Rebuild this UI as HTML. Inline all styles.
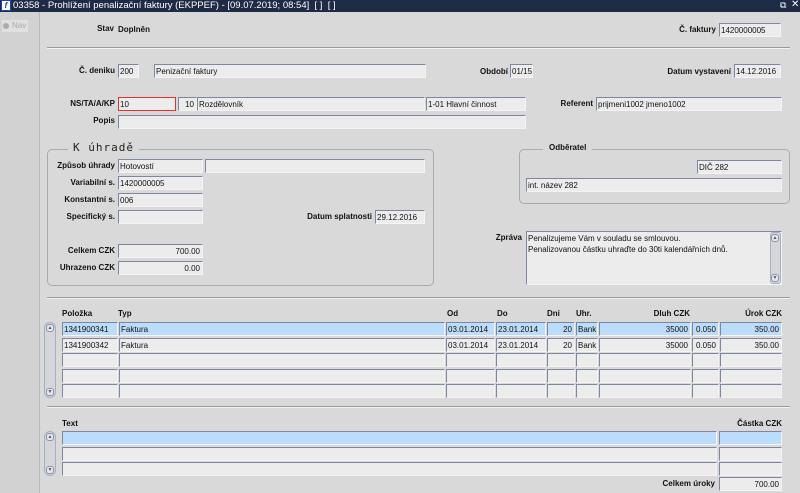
<!DOCTYPE html>
<html><head><meta charset="utf-8">
<style>
*{margin:0;padding:0;box-sizing:border-box}
body{width:800px;height:493px;overflow:hidden;background:#d9d9d9;font-family:"Liberation Sans",Arial,sans-serif;font-size:8px;color:#000;position:relative}
.a{position:absolute}
.f{position:absolute;background:#ececec;border-top:1px solid #7b88a0;border-left:1px solid #7b88a0;border-right:1px solid #f4f4f4;border-bottom:1px solid #f4f4f4;height:14px;font-size:8px;line-height:13px;padding:0 1px;white-space:nowrap;overflow:hidden;color:#111}
.r{text-align:right;padding-right:2px}
.sel{background:#bcdcfb}
.l{position:absolute;font-weight:bold;font-size:8px;line-height:12px;text-align:right;white-space:nowrap;color:#111}
.h{position:absolute;font-weight:bold;font-size:8px;white-space:nowrap;color:#111}
.sep{position:absolute;height:1px;background:#9a9a9a;border-bottom:1px solid #f2f2f2;box-sizing:content-box}
.box{position:absolute;border:1px solid #a6aab3;border-radius:5px}
.sb{position:absolute;width:12px;border:1px solid #a6b0c2;border-radius:6px;background:#d4d6da}
.sb .u,.sb .d{position:absolute;left:1px;width:8px;height:8px;border:1px solid #8894aa;border-radius:3px;background:#e6e8ec;font-size:5px;line-height:7px;text-align:center;color:#556}
</style></head><body>
<div class="a" style="left:0;top:0;width:800px;height:12px;background:#1e2b45"></div>
<div class="a" style="left:1px;top:0;width:10px;height:11px;background:#fff;border:1px solid #2040c0;font-size:8px;line-height:9px;font-weight:bold;font-style:italic;color:#2040c0;text-align:center">f</div>
<div class="a" style="left:13px;top:0;color:#fff;font-size:9.5px;line-height:12px;white-space:nowrap">03358 - Prohlížení penalizační faktury (EKPPEF) - [09.07.2019; 08:54]&nbsp; [ ]&nbsp; [ ]</div>
<div class="a" style="left:780px;top:0;color:#fff;font-size:9px">⧉</div>
<div class="a" style="left:791px;top:-1px;color:#fff;font-size:10px">✕</div>
<div class="a" style="left:0;top:12px;width:40px;height:481px;background:#d2d2d2;border-right:1px solid #b8b8b8"></div>
<div class="a" style="left:2px;top:20px;width:26px;height:12px;background:#e0e0e0"></div>
<div class="a" style="left:3px;top:23px;width:6px;height:6px;border-radius:50%;background:#aaa"></div>
<div class="a" style="left:12px;top:21px;color:#a8a8a8;font-size:8px">Nav</div>

<div class="l" style="right:686px;top:23px">Stav</div>
<div class="h" style="left:118px;top:25px">Doplněn</div>
<div class="l" style="right:84px;top:24px">Č. faktury</div>
<div class="f" style="left:719px;top:23px;width:62px">1420000005</div>
<div class="sep" style="left:47px;top:47px;width:743px"></div>

<div class="l" style="right:685px;top:65px">Č. deniku</div>
<div class="f" style="left:118px;top:64px;width:21px">200</div>
<div class="f" style="left:154px;top:64px;width:272px">Penizační faktury</div>
<div class="l" style="right:292px;top:66px">Období</div>
<div class="f" style="left:510px;top:64px;width:23px">01/15</div>
<div class="l" style="right:69px;top:66px">Datum vystavení</div>
<div class="f" style="left:734px;top:64px;width:47px">14.12.2016</div>

<div class="l" style="right:685px;top:98px">NS/TA/A/KP</div>
<div class="f" style="left:118px;top:97px;width:58px;border:1px solid #e03030">10</div>
<div class="f r" style="left:178px;top:97px;width:19px">10</div>
<div class="f" style="left:197px;top:97px;width:228px">Rozdělovník</div>
<div class="f" style="left:426px;top:97px;width:100px">1-01 Hlavní činnost</div>
<div class="l" style="right:207px;top:98px">Referent</div>
<div class="f" style="left:596px;top:97px;width:186px">prijmeni1002 jmeno1002</div>
<div class="l" style="right:685px;top:115px">Popis</div>
<div class="f" style="left:118px;top:115px;width:408px"></div>

<div class="box" style="left:47px;top:149px;width:387px;height:137px"></div>
<div class="a" style="left:68px;top:141px;background:#d9d9d9;padding:0 5px;font-family:'DejaVu Sans Mono','Liberation Mono',monospace;font-size:11px;letter-spacing:1px;color:#222">K úhradě</div>
<div class="l" style="right:685px;top:160px">Způsob úhrady</div>
<div class="f" style="left:118px;top:159px;width:85px">Hotovostí</div>
<div class="f" style="left:205px;top:159px;width:220px"></div>
<div class="l" style="right:685px;top:177px">Variabilní s.</div>
<div class="f" style="left:118px;top:176px;width:85px">1420000005</div>
<div class="l" style="right:685px;top:194px">Konstantní s.</div>
<div class="f" style="left:118px;top:193px;width:85px">006</div>
<div class="l" style="right:685px;top:211px">Specifický s.</div>
<div class="f" style="left:118px;top:210px;width:85px"></div>
<div class="l" style="right:428px;top:211px">Datum splatnosti</div>
<div class="f" style="left:375px;top:210px;width:50px">29.12.2016</div>
<div class="l" style="right:685px;top:245px">Celkem CZK</div>
<div class="f r" style="left:118px;top:244px;width:85px">700.00</div>
<div class="l" style="right:685px;top:262px">Uhrazeno CZK</div>
<div class="f r" style="left:118px;top:261px;width:85px">0.00</div>

<div class="box" style="left:519px;top:149px;width:271px;height:55px"></div>
<div class="h" style="left:543px;top:143px;background:#d9d9d9;padding:0 6px">Odběratel</div>
<div class="f" style="left:697px;top:160px;width:85px">DIČ 282</div>
<div class="f" style="left:526px;top:178px;width:256px">int. název 282</div>

<div class="l" style="right:278px;top:232px">Zpráva</div>
<div class="f" style="left:526px;top:231px;width:256px;height:54px;white-space:normal;line-height:11px;padding-top:1px">Penalizujeme Vám v souladu se smlouvou.<br>Penalizovanou částku uhraďte do 30ti kalendářních dnů.</div>
<div class="sb" style="left:770px;top:232px;width:11px;height:52px;border-radius:3px"><div class="u" style="top:1px;left:0">▲</div><div class="d" style="bottom:1px;left:0">▼</div></div>

<div class="sep" style="left:47px;top:297px;width:743px"></div>

<div class="h" style="left:62px;top:309px">Položka</div>
<div class="h" style="left:118px;top:309px">Typ</div>
<div class="h" style="left:447px;top:309px">Od</div>
<div class="h" style="left:497px;top:309px">Do</div>
<div class="h" style="left:547px;top:309px">Dni</div>
<div class="h" style="left:576px;top:309px">Uhr.</div>
<div class="h" style="right:110px;top:309px">Dluh CZK</div>
<div class="h" style="right:18px;top:309px">Úrok CZK</div>

<div class="sb" style="left:44px;top:322px;height:76px"><div class="u" style="top:1px">▲</div><div class="d" style="bottom:1px">▼</div></div>

<div class="f sel" style="left:62px;top:322px;width:56px">1341900341</div>
<div class="f sel" style="left:119px;top:322px;width:326px">Faktura</div>
<div class="f sel" style="left:446px;top:322px;width:49px">03.01.2014</div>
<div class="f sel" style="left:496px;top:322px;width:50px">23.01.2014</div>
<div class="f sel r" style="left:547px;top:322px;width:28px">20</div>
<div class="f sel" style="left:576px;top:322px;width:22px">Bank</div>
<div class="f sel r" style="left:599px;top:322px;width:92px">35000</div>
<div class="f sel r" style="left:692px;top:322px;width:27px">0.050</div>
<div class="f sel r" style="left:720px;top:322px;width:62px">350.00</div>

<div class="f" style="left:62px;top:338px;width:56px">1341900342</div>
<div class="f" style="left:119px;top:338px;width:326px">Faktura</div>
<div class="f" style="left:446px;top:338px;width:49px">03.01.2014</div>
<div class="f" style="left:496px;top:338px;width:50px">23.01.2014</div>
<div class="f r" style="left:547px;top:338px;width:28px">20</div>
<div class="f" style="left:576px;top:338px;width:22px">Bank</div>
<div class="f r" style="left:599px;top:338px;width:92px">35000</div>
<div class="f r" style="left:692px;top:338px;width:27px">0.050</div>
<div class="f r" style="left:720px;top:338px;width:62px">350.00</div>

<div class="f" style="left:62px;top:353px;width:56px"></div><div class="f" style="left:119px;top:353px;width:326px"></div><div class="f" style="left:446px;top:353px;width:49px"></div><div class="f" style="left:496px;top:353px;width:50px"></div><div class="f" style="left:547px;top:353px;width:28px"></div><div class="f" style="left:576px;top:353px;width:22px"></div><div class="f" style="left:599px;top:353px;width:92px"></div><div class="f" style="left:692px;top:353px;width:27px"></div><div class="f" style="left:720px;top:353px;width:62px"></div>
<div class="f" style="left:62px;top:369px;width:56px"></div><div class="f" style="left:119px;top:369px;width:326px"></div><div class="f" style="left:446px;top:369px;width:49px"></div><div class="f" style="left:496px;top:369px;width:50px"></div><div class="f" style="left:547px;top:369px;width:28px"></div><div class="f" style="left:576px;top:369px;width:22px"></div><div class="f" style="left:599px;top:369px;width:92px"></div><div class="f" style="left:692px;top:369px;width:27px"></div><div class="f" style="left:720px;top:369px;width:62px"></div>
<div class="f" style="left:62px;top:384px;width:56px"></div><div class="f" style="left:119px;top:384px;width:326px"></div><div class="f" style="left:446px;top:384px;width:49px"></div><div class="f" style="left:496px;top:384px;width:50px"></div><div class="f" style="left:547px;top:384px;width:28px"></div><div class="f" style="left:576px;top:384px;width:22px"></div><div class="f" style="left:599px;top:384px;width:92px"></div><div class="f" style="left:692px;top:384px;width:27px"></div><div class="f" style="left:720px;top:384px;width:62px"></div>

<div class="sep" style="left:47px;top:406px;width:743px"></div>

<div class="h" style="left:62px;top:419px">Text</div>
<div class="h" style="right:18px;top:419px">Částka CZK</div>
<div class="sb" style="left:44px;top:431px;height:45px"><div class="u" style="top:1px">▲</div><div class="d" style="bottom:1px">▼</div></div>
<div class="f sel" style="left:62px;top:431px;width:655px"></div><div class="f sel" style="left:719px;top:431px;width:63px"></div>
<div class="f" style="left:62px;top:447px;width:655px"></div><div class="f" style="left:719px;top:447px;width:63px"></div>
<div class="f" style="left:62px;top:462px;width:655px"></div><div class="f" style="left:719px;top:462px;width:63px"></div>
<div class="l" style="right:85px;top:478px">Celkem úroky</div>
<div class="f r" style="left:719px;top:477px;width:63px">700.00</div>
</body></html>
